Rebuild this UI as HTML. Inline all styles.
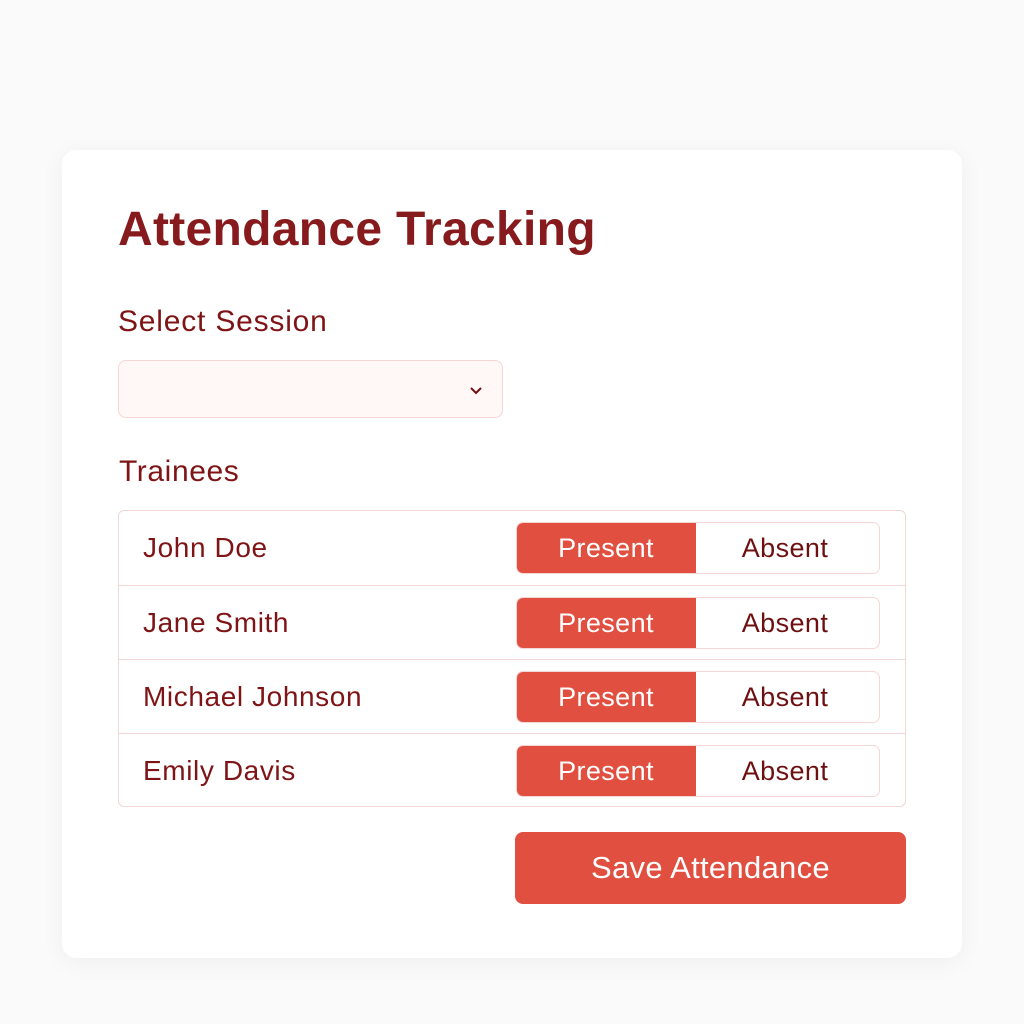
<!DOCTYPE html>
<html><head><meta charset="utf-8"><style>
*{box-sizing:border-box;margin:0;padding:0}
body{width:1024px;height:1024px;background:#fafafa;font-family:"Liberation Sans",Arial,sans-serif;color:#7e1416;position:relative;overflow:hidden}
.card{position:absolute;left:62px;top:150px;width:900px;height:808px;background:#fff;border-radius:14px;box-shadow:0 4px 24px rgba(0,0,0,0.05)}
.abs{position:absolute}
h1{position:absolute;left:118px;top:202px;font-size:48px;font-weight:bold;color:#871a1c;letter-spacing:0.3px;white-space:nowrap}
.lbl{position:absolute;font-size:30px;color:#7e1416;white-space:nowrap;letter-spacing:0.8px}
.sel{position:absolute;left:118px;top:360px;width:385px;height:58px;border:1px solid #f5d6d4;border-radius:8px;background:#fff8f7}
.table{position:absolute;left:118px;top:510px;width:788px;height:297px;border:1px solid #f3d7d6;border-radius:6px}
.row{position:absolute;left:0;width:786px;height:74px;border-top:1px solid #f3d7d6}
.row:first-child{border-top:none}
.name{position:absolute;left:24px;top:21px;font-size:28px;color:#7e1416;white-space:nowrap;letter-spacing:0.6px}
.tog{position:absolute;left:397px;top:11px;width:364px;height:52px;border:1px solid #f5d6d4;border-radius:7px;overflow:hidden;background:#fff}
.p{position:absolute;left:0;top:0;width:180px;height:52px;background:#e04f3f;color:#fff;font-size:27px;text-align:center;line-height:52px;margin:-1px 0 0 -1px;letter-spacing:0.4px}
.a{position:absolute;left:180px;top:0;width:184px;height:50px;color:#6e1012;font-size:27px;text-align:center;line-height:50px;letter-spacing:0.4px;padding-right:8px}
.save{position:absolute;left:515px;top:832px;width:391px;height:72px;background:#e04f3f;border-radius:8px;color:#fff;font-size:31px;text-align:center;line-height:72px;letter-spacing:0.3px}
</style></head><body>
<div class="card"></div>
<h1>Attendance Tracking</h1>
<div class="lbl" style="left:118px;top:305px">Select Session</div>
<div class="sel"><svg class="abs" style="left:349px;top:24px" width="16" height="12" viewBox="0 0 16 12"><path d="M3 3l5 5 5-5" fill="none" stroke="#6e1012" stroke-width="2"/></svg></div>
<div class="lbl" style="left:119px;top:455px;letter-spacing:0.6px">Trainees</div>
<div class="table">
<div class="row" style="top:0"><div class="name">John Doe</div><div class="tog"><div class="p">Present</div><div class="a">Absent</div></div></div>
<div class="row" style="top:74px"><div class="name">Jane Smith</div><div class="tog"><div class="p">Present</div><div class="a">Absent</div></div></div>
<div class="row" style="top:148px"><div class="name">Michael Johnson</div><div class="tog"><div class="p">Present</div><div class="a">Absent</div></div></div>
<div class="row" style="top:222px"><div class="name">Emily Davis</div><div class="tog"><div class="p">Present</div><div class="a">Absent</div></div></div>
</div>
<div class="save">Save Attendance</div>
</body></html>
